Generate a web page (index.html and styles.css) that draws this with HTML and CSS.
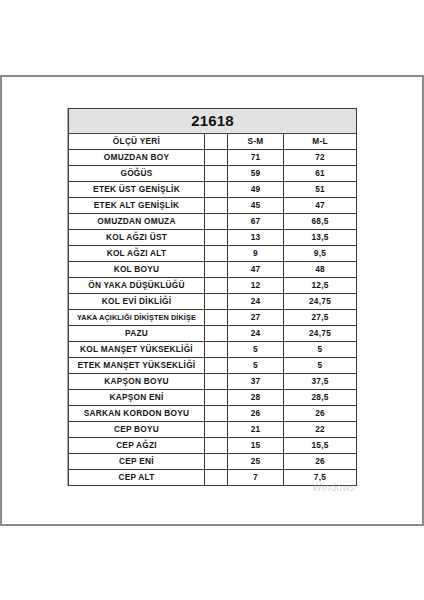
FILE: index.html
```html
<!DOCTYPE html>
<html>
<head>
<meta charset="utf-8">
<link rel="stylesheet" href="styles.css">
</head>
<body>
<div class="frame">
  <div class="sheet">
    <table class="sizes">
      <colgroup>
        <col class="c-name"><col class="c-blank"><col class="c-sm"><col class="c-ml">
      </colgroup>
      <tr class="title"><td colspan="4">21618</td></tr>
      <tr><td>ÖLÇÜ YERİ</td><td></td><td>S-M</td><td>M-L</td></tr>
      <tr><td>OMUZDAN BOY</td><td></td><td>71</td><td>72</td></tr>
      <tr><td>GÖĞÜS</td><td></td><td>59</td><td>61</td></tr>
      <tr><td>ETEK ÜST GENİŞLİK</td><td></td><td>49</td><td>51</td></tr>
      <tr><td>ETEK ALT GENİŞLİK</td><td></td><td>45</td><td>47</td></tr>
      <tr><td>OMUZDAN OMUZA</td><td></td><td>67</td><td>68,5</td></tr>
      <tr><td>KOL AĞZI ÜST</td><td></td><td>13</td><td>13,5</td></tr>
      <tr><td>KOL AĞZI ALT</td><td></td><td>9</td><td>9,5</td></tr>
      <tr><td>KOL BOYU</td><td></td><td>47</td><td>48</td></tr>
      <tr><td>ÖN YAKA DÜŞÜKLÜĞÜ</td><td></td><td>12</td><td>12,5</td></tr>
      <tr><td>KOL EVİ DİKLİĞİ</td><td></td><td>24</td><td>24,75</td></tr>
      <tr><td class="tight">YAKA AÇIKLIĞI DİKİŞTEN DİKİŞE</td><td></td><td>27</td><td>27,5</td></tr>
      <tr><td>PAZU</td><td></td><td>24</td><td>24,75</td></tr>
      <tr><td>KOL MANŞET YÜKSEKLİĞİ</td><td></td><td>5</td><td>5</td></tr>
      <tr><td>ETEK MANŞET YÜKSEKLİĞİ</td><td></td><td>5</td><td>5</td></tr>
      <tr><td>KAPŞON BOYU</td><td></td><td>37</td><td>37,5</td></tr>
      <tr><td>KAPŞON ENİ</td><td></td><td>28</td><td>28,5</td></tr>
      <tr><td>SARKAN KORDON BOYU</td><td></td><td>26</td><td>26</td></tr>
      <tr><td>CEP BOYU</td><td></td><td>21</td><td>22</td></tr>
      <tr><td>CEP AĞZI</td><td></td><td>15</td><td>15,5</td></tr>
      <tr><td>CEP ENİ</td><td></td><td>25</td><td>26</td></tr>
      <tr><td>CEP ALT</td><td></td><td>7</td><td>7,5</td></tr>
    </table>
    <span class="watermark">Windows</span>
  </div>
</div>
</body>
</html>
```

FILE: styles.css
```css
html, body {
  margin: 0;
  padding: 0;
  background: #fff;
}

.frame {
  box-sizing: border-box;
  margin-top: 75px;
  width: 424px;
  height: 451px;
  border: 2px solid #8a8a8a;
  padding: 31px 0 0 66px;
}

.sheet {
  position: relative;
  width: 288px;
}

.sizes {
  border-collapse: collapse;
  table-layout: fixed;
  width: 288px;
  font-family: "Liberation Sans", Arial, sans-serif;
  font-weight: bold;
  color: #141414;
  border: 1px solid #555;
  box-shadow: -1px 0 0 #b0b0b0;
}

.c-name { width: 136px; }
.c-blank { width: 23px; }
.c-sm { width: 56px; }
.c-ml { width: 73px; }

.sizes td {
  border: 1px solid #3a3a3a;
  height: 15px;
  padding: 0;
  text-align: center;
  vertical-align: middle;
  font-size: 8.3px;
  letter-spacing: 0.25px;
  line-height: 15px;
  white-space: nowrap;
  overflow: hidden;
}

.sizes td.tight {
  font-size: 7.3px;
  letter-spacing: 0.1px;
}

.sizes .title td {
  height: 24px;
  line-height: 24px;
  font-size: 15px;
  letter-spacing: 0.2px;
  color: #111;
  background: repeating-conic-gradient(#cdcdcd 0 25%, #f6f6f6 0 50%) 0 0 / 2px 2px;
  border-bottom: 1px solid #444;
}

.watermark {
  position: absolute;
  right: 1px;
  bottom: -7px;
  font-family: "Liberation Sans", Arial, sans-serif;
  font-size: 10px;
  line-height: 10px;
  color: rgba(150, 150, 150, 0.45);
  letter-spacing: 0.3px;
}
```
